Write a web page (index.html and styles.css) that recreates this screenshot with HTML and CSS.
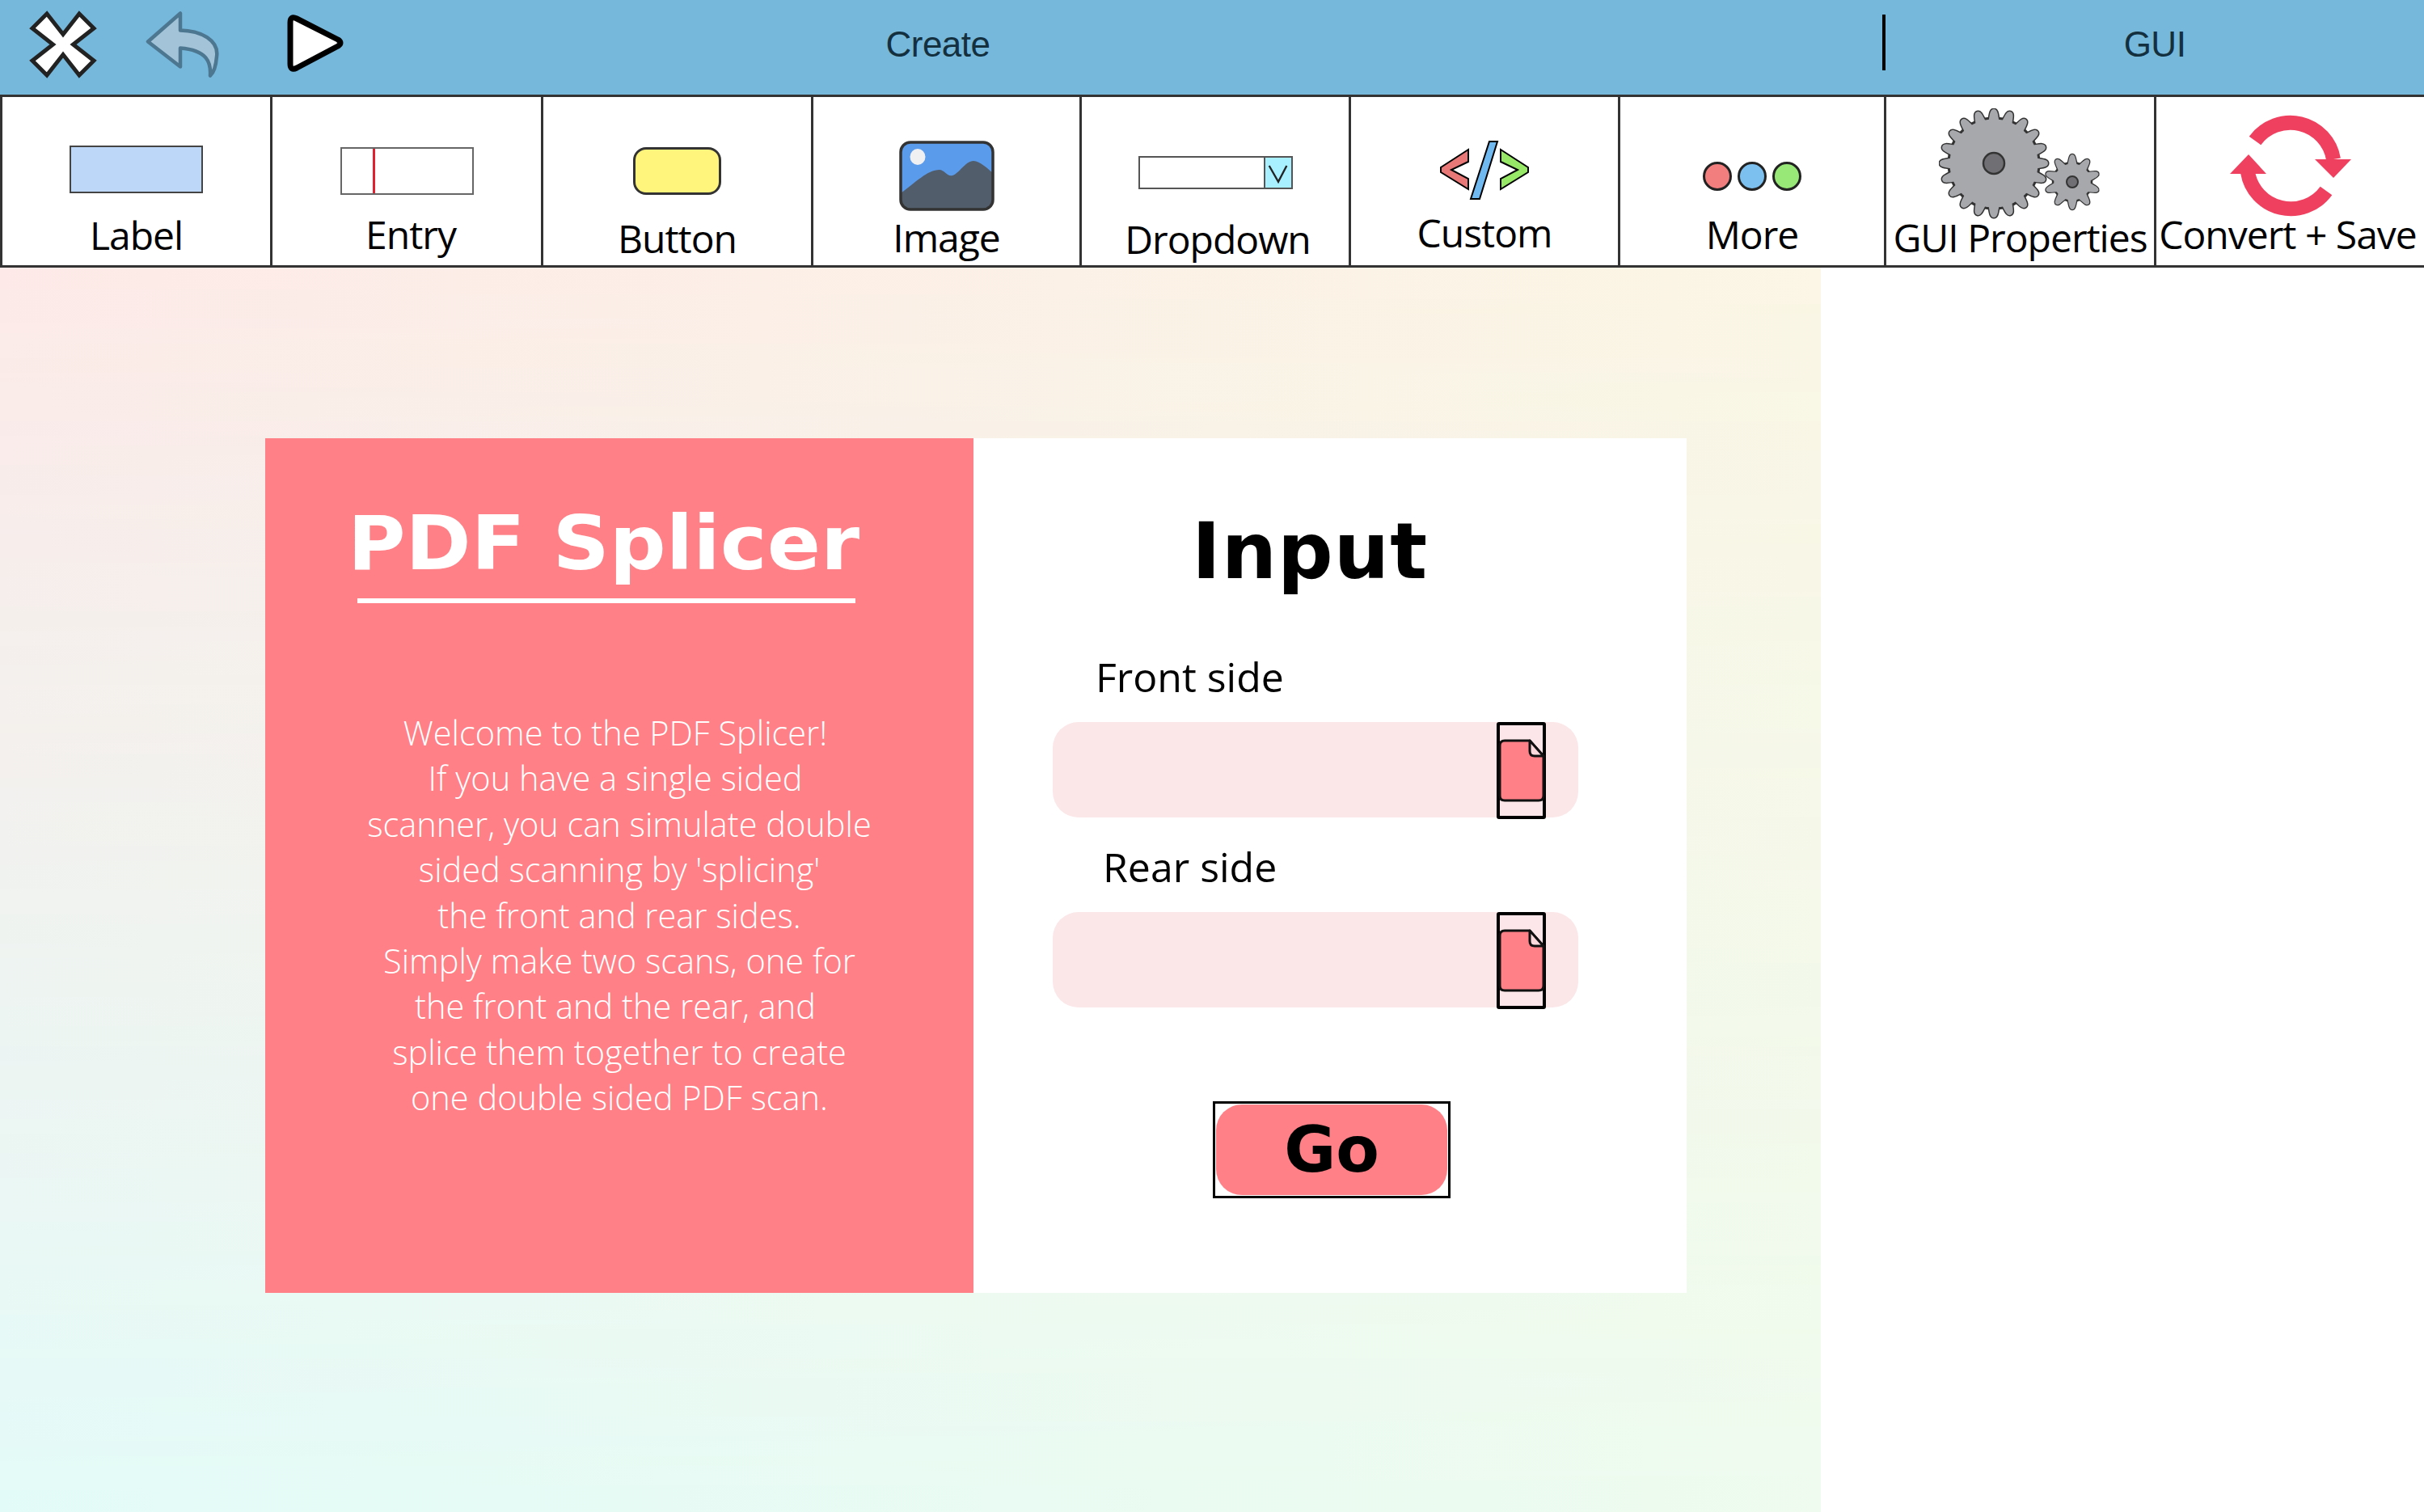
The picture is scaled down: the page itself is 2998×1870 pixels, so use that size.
FILE: index.html
```html
<!DOCTYPE html>
<html lang="en">
<head>
<meta charset="utf-8">
<title>PDF Splicer GUI builder</title>
<link rel="stylesheet" href="styles.css">
</head>
<body>
<div class="app">
  <header class="toolbar">
    <div class="tools">
      <svg class="tool tool-x" viewBox="0 0 90 90"><path d="M45 34.5 L65 9 L83 27 L57.5 47 L83 67 L65 85 L45 59.5 L25 85 L7 67 L32.5 47 L7 27 L25 9 Z" fill="#fff" stroke="#222" stroke-width="5"/></svg>
      <svg class="tool tool-back" viewBox="0 0 95 90"><path d="M4 43.5 L44 8.5 V29.5 C70 30 92 42 89 62 C88 74 85 82 81 85.5 C82 70 78 54 44 51.5 V74.5 Z" fill="#a3c4d8" stroke="#4d7690" stroke-width="4.5" stroke-linejoin="round"/></svg>
      <svg class="tool tool-play" viewBox="0 0 80 90"><path d="M9 20 Q9 11 17 15 L68 41 Q74 45 68 49 L17 76 Q9 80 9 71 Z" fill="#fff" stroke="#000" stroke-width="7" stroke-linejoin="round"/></svg>
    </div>
    <div class="section-title">Create</div>
    <div class="spacer"></div>
    <div class="divider"></div>
    <div class="section-title">GUI</div>
  </header>

  <nav class="ribbon">
    <div class="cell cell-label">
      <div class="ic-label"></div>
      <span class="cap">Label</span>
    </div>
    <div class="cell cell-entry">
      <div class="ic-entry"><i class="caret"></i></div>
      <span class="cap">Entry</span>
    </div>
    <div class="cell cell-button">
      <div class="ic-button"></div>
      <span class="cap">Button</span>
    </div>
    <div class="cell cell-image">
      <svg class="ic-image" viewBox="0 0 118 87"><rect x="2" y="2" width="114" height="83" rx="12" fill="#5b9bec"/><ellipse cx="23" cy="20" rx="9.5" ry="10" fill="#f0f0f2"/><path d="M2 65 C20 52 35 36 50 36 C56 36 60 45 66 43 C74 41 82 25 92 25 C100 25 110 35 116 40 V73 Q116 85 104 85 H14 Q2 85 2 73 Z" fill="#525d6b"/><rect x="2" y="2" width="114" height="83" rx="12" fill="none" stroke="#333" stroke-width="3.5"/></svg>
      <span class="cap">Image</span>
    </div>
    <div class="cell cell-dropdown">
      <div class="ic-dropdown"><svg class="ic-drop-arrow" viewBox="0 0 34 38"><path d="M5 10 L17 31 L28 10" fill="none" stroke="#222" stroke-width="2.5"/></svg></div>
      <span class="cap">Dropdown</span>
    </div>
    <div class="cell cell-custom">
      <svg class="ic-custom" viewBox="0 0 112 73"><path d="M36 11 V26 L15 36 L36 47 V60 L2 39 V33 Z" fill="#e87878" stroke="#000" stroke-width="2"/><path d="M76 11 V26 L97 36 L76 47 V60 L110 39 V33 Z" fill="#98e868" stroke="#000" stroke-width="2"/><path d="M62 1 H72 L50 72 H39 Z" fill="#70b8f0" stroke="#000" stroke-width="2"/></svg>
      <span class="cap">Custom</span>
    </div>
    <div class="cell cell-more">
      <div class="ic-more"><i class="dot dot-red"></i><i class="dot dot-blue"></i><i class="dot dot-green"></i></div>
      <span class="cap">More</span>
    </div>
    <div class="cell cell-gear">
      <svg class="ic-gear" viewBox="0 0 202 138">
        <defs>
          <path id="tb" d="M-6.5 -52 C-5 -60 -5 -67 0 -67 C5 -67 5 -60 6.5 -52 Z"/>
          <g id="big">
            <use href="#tb"/><use href="#tb" transform="rotate(18)"/><use href="#tb" transform="rotate(36)"/><use href="#tb" transform="rotate(54)"/><use href="#tb" transform="rotate(72)"/>
            <use href="#tb" transform="rotate(90)"/><use href="#tb" transform="rotate(108)"/><use href="#tb" transform="rotate(126)"/><use href="#tb" transform="rotate(144)"/><use href="#tb" transform="rotate(162)"/>
            <use href="#tb" transform="rotate(180)"/><use href="#tb" transform="rotate(198)"/><use href="#tb" transform="rotate(216)"/><use href="#tb" transform="rotate(234)"/><use href="#tb" transform="rotate(252)"/>
            <use href="#tb" transform="rotate(270)"/><use href="#tb" transform="rotate(288)"/><use href="#tb" transform="rotate(306)"/><use href="#tb" transform="rotate(324)"/><use href="#tb" transform="rotate(342)"/>
          </g>
          <path id="ts" d="M-6 -20 C-4 -27 -4 -34 0 -34 C4 -34 4 -27 6 -20 Z"/>
          <g id="small">
            <use href="#ts"/><use href="#ts" transform="rotate(36)"/><use href="#ts" transform="rotate(72)"/><use href="#ts" transform="rotate(108)"/><use href="#ts" transform="rotate(144)"/>
            <use href="#ts" transform="rotate(180)"/><use href="#ts" transform="rotate(216)"/><use href="#ts" transform="rotate(252)"/><use href="#ts" transform="rotate(288)"/><use href="#ts" transform="rotate(324)"/>
          </g>
        </defs>
        <g transform="translate(68 68)">
          <use href="#big" fill="#a7a8ac" stroke="#333" stroke-width="3"/>
          <circle r="56" fill="#a7a8ac" stroke="#333" stroke-width="3"/>
          <use href="#big" fill="#a7a8ac"/>
          <circle r="13" fill="#707074" stroke="#333" stroke-width="2.5"/>
        </g>
        <g transform="translate(165 91)">
          <use href="#small" fill="#a7a8ac" stroke="#333" stroke-width="2.5"/>
          <circle r="24" fill="#a7a8ac" stroke="#333" stroke-width="2.5"/>
          <use href="#small" fill="#a7a8ac"/>
          <circle r="7" fill="#707074" stroke="#333" stroke-width="2"/>
        </g>
      </svg>
      <span class="cap">GUI Properties</span>
    </div>
    <div class="cell cell-sync">
      <svg class="ic-sync" viewBox="-80 -68 160 136">
        <path d="M-44 -31 A54 54 0 0 1 53 -8" fill="none" stroke="#f04060" stroke-width="18"/>
        <path d="M30 -8 H75 L53 15 Z" fill="#f04060"/>
        <path d="M44 31 A54 54 0 0 1 -53 8" fill="none" stroke="#f04060" stroke-width="18"/>
        <path d="M-30 10 H-75 L-52 -14 Z" fill="#f04060"/>
      </svg>
      <span class="cap">Convert + Save</span>
    </div>
  </nav>

  <main class="canvas">
    <section class="card">
      <div class="panel-left">
        <h1 class="brand">PDF Splicer</h1>
        <div class="brand-rule"></div>
        <div class="intro">
          <div class="line line-shift">Welcome to the PDF Splicer!</div>
          <div class="line line-shift">If you have a single sided</div>
          <div class="line">scanner, you can simulate double</div>
          <div class="line">sided scanning by 'splicing'</div>
          <div class="line">the front and rear sides.</div>
          <div class="line">Simply make two scans, one for</div>
          <div class="line line-shift">the front and the rear, and</div>
          <div class="line">splice them together to create</div>
          <div class="line">one double sided PDF scan.</div>
        </div>
      </div>
      <div class="panel-right">
        <h2 class="heading">Input</h2>
        <div class="field-label field-label-front">Front side</div>
        <div class="field">
          <div class="file-btn"><svg class="doc" viewBox="0 0 58 78"><path d="M8 2 H39 L56 21 V70 Q56 76 50 76 H8 Q2 76 2 70 V8 Q2 2 8 2 Z" fill="#ff8087" stroke="#111" stroke-width="3"/><path d="M39 2 L56 21 H45 Q39 21 39 15 Z" fill="#fcd9dd" stroke="#111" stroke-width="3" stroke-linejoin="round"/></svg></div>
        </div>
        <div class="field-label field-label-rear">Rear side</div>
        <div class="field">
          <div class="file-btn"><svg class="doc" viewBox="0 0 58 78"><path d="M8 2 H39 L56 21 V70 Q56 76 50 76 H8 Q2 76 2 70 V8 Q2 2 8 2 Z" fill="#ff8087" stroke="#111" stroke-width="3"/><path d="M39 2 L56 21 H45 Q39 21 39 15 Z" fill="#fcd9dd" stroke="#111" stroke-width="3" stroke-linejoin="round"/></svg></div>
        </div>
        <div class="go-frame"><div class="go">Go</div></div>
      </div>
    </section>
  </main>
</div>
</body>
</html>
```

FILE: styles.css
```css
* { box-sizing: border-box; }
html, body { margin: 0; padding: 0; background: #fff; }
body { font-family: "Open Sans", "Liberation Sans", sans-serif; color: #000; }
.app { width: 2998px; height: 1870px; overflow: hidden; display: flex; flex-direction: column; }

/* top bar */
.toolbar { height: 117px; flex: none; background: #75b8dc; display: grid; grid-template-columns: 320px 1680px 328px 4px 666px; align-items: center; padding-bottom: 12px; }
.tools { display: flex; align-items: center; padding-left: 33px; }
.tool { height: 90px; flex: none; }
.tool-x { width: 90px; }
.tool-back { width: 95px; margin-left: 56px; }
.tool-play { width: 80px; margin-left: 76px; }
.section-title { font-family: "Liberation Sans", Arial, sans-serif; font-size: 44px; color: #14303f; text-align: center; margin-top: 5px; letter-spacing: -0.5px; }
.divider { height: 69px; background: #000; }

/* ribbon */
.ribbon { height: 214px; flex: none; display: grid; grid-template-columns: 334px 335px 334px 332px 333px 333px 329px 334px 334px; grid-template-rows: minmax(0, 1fr); border-top: 3px solid #333; border-bottom: 3px solid #333; background: #fff; }
.cell { display: flex; flex-direction: column; align-items: center; border-left: 3px solid #333; min-width: 0; min-height: 0; }
.cap { font-size: 48px; line-height: 50px; margin-top: auto; white-space: nowrap; letter-spacing: -1px; }

.cell-label .ic-label { margin-top: 60px; width: 165px; height: 59px; background: #bdd7f8; border: 2px solid #444; flex: none; }
.cell-label .cap { margin-bottom: 12px; }
.ic-entry { margin-top: 62px; width: 165px; height: 59px; border: 2px solid #666; flex: none; padding-left: 38px; display: flex; }
.caret { width: 3px; background: #e02030; display: block; }
.cell-entry .cap { margin-bottom: 13px; margin-left: 10px; }
.ic-button { margin-top: 62px; width: 109px; height: 59px; background: #fff47c; border: 3px solid #333; border-radius: 16px; flex: none; }
.cell-button .cap { margin-bottom: 8px; }
.ic-image { margin-top: 54px; width: 118px; height: 87px; flex: none; }
.cell-image .cap { margin-bottom: 9px; }
.ic-dropdown { margin-top: 73px; width: 191px; height: 41px; border: 2px solid #555; flex: none; display: flex; justify-content: flex-end; }
.ic-drop-arrow { width: 34px; height: 37px; background: #a8f0ff; border-left: 2px solid #555; flex: none; }
.cell-dropdown .cap { margin-bottom: 7px; margin-left: 6px; }
.ic-custom { margin-top: 54px; width: 112px; height: 73px; flex: none; }
.cell-custom .cap { margin-bottom: 15px; }
.ic-more { margin-top: 80px; display: flex; gap: 7px; flex: none; }
.dot { width: 36px; height: 36px; border-radius: 50%; border: 3.5px solid #222; display: block; }
.dot-red { background: #f27e7e; }
.dot-blue { background: #7cc0f0; }
.dot-green { background: #98e878; }
.cell-more .cap { margin-bottom: 13px; }
.ic-gear { margin-top: 14px; margin-bottom: -8px; width: 202px; height: 138px; flex: none; }
.cell-gear .cap { margin-bottom: 9px; }
.ic-sync { margin-top: 17px; margin-bottom: -16px; width: 160px; height: 136px; flex: none; }
.cell-sync .cap { margin-bottom: 13px; margin-left: -6px; }

/* design canvas */
.canvas { position: relative; width: 2252px; height: 1539px; padding: 211px 0 0 328px; background: linear-gradient(to right, #fdeae8, #fbf6e5); }
.canvas::before { content: ""; position: absolute; inset: 0; background: linear-gradient(to right, #e3fbf8, #eefbee); -webkit-mask-image: linear-gradient(to bottom, transparent, #000); mask-image: linear-gradient(to bottom, transparent, #000); }
.card { position: relative; width: 1758px; height: 1057px; display: flex; background: #fff; }

.panel-left { width: 876px; flex: none; background: #ff8087; color: #fff; padding-top: 81px; }
.brand { margin: 0 0 0 102px; font-family: "DejaVu Sans", sans-serif; font-weight: 700; font-size: 92px; line-height: 100px; white-space: nowrap; width: 596px; transform: scaleX(1.062); transform-origin: left center; }
.brand-rule { width: 616px; height: 6px; margin: 17px 0 0 114px; background: #fff; }
.intro { margin-top: 132px; font-size: 41.5px; font-weight: 300; line-height: 56.4px; text-align: center; }
.line { white-space: nowrap; }
.line-shift { padding-right: 10px; }

.panel-right { flex: 1; padding: 90px 0 0 98px; }
.heading { margin: 0 0 0 172px; font-family: "DejaVu Sans", sans-serif; font-weight: 700; font-size: 96px; line-height: 100px; letter-spacing: 1px; }
.field-label { font-size: 50px; line-height: 60px; white-space: nowrap; }
.field-label-front { margin: 75px 0 26px 53px; }
.field-label-rear { margin: 31px 0 26px 62px; }
.field { width: 650px; height: 118px; border-radius: 32px; background: #fbe6e8; display: flex; justify-content: flex-end; align-items: flex-start; padding-right: 40px; }
.file-btn { width: 61px; height: 120px; flex: none; border: 4px solid #000; border-radius: 3px; display: flex; align-items: center; justify-content: center; background: #fde6e9; }
.doc { width: 58px; height: 78px; flex: none; }
.go-frame { margin: 116px 0 0 198px; width: 294px; height: 120px; border: 3px solid #000; padding: 1px; }
.go { height: 100%; border-radius: 32px; background: #ff8087; display: flex; align-items: center; justify-content: center; font-family: "DejaVu Sans", sans-serif; font-weight: 700; font-size: 78px; line-height: 1; }
```
